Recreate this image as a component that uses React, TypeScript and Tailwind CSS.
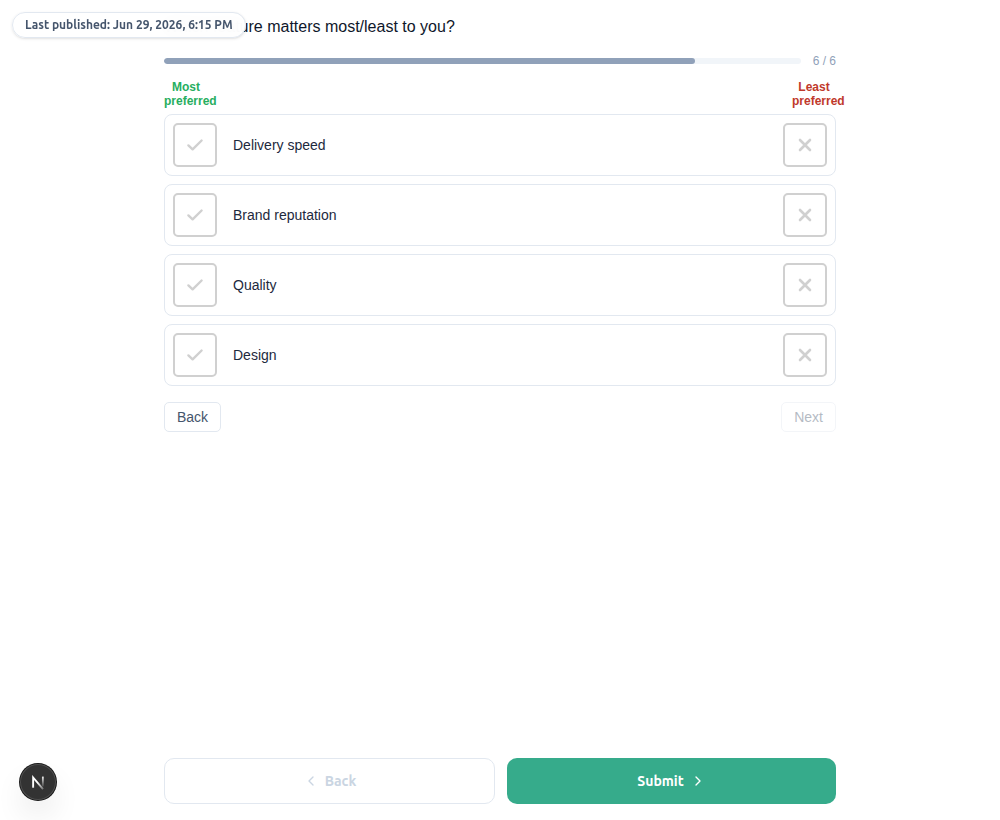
import { useState } from "react";
import { ChevronLeft, ChevronRight } from "lucide-react";

interface OptionRowProps {
  label: string;
  choice?: "most" | "least";
  onChoose: (choice: "most" | "least") => void;
}

const options = ["Delivery speed", "Brand reputation", "Quality", "Design"];

function OptionRow({ label, choice, onChoose }: OptionRowProps) {
  return (
    <li className="flex items-center gap-4 rounded-lg border border-slate-200 bg-white p-2">
      <button
        type="button"
        aria-label={`${label}: most preferred`}
        aria-pressed={choice === "most"}
        onClick={() => onChoose("most")}
        className="flex size-11 shrink-0 cursor-pointer items-center justify-center rounded-[5px] border-2 border-[#d0d0d0] text-[#d0d0d0] aria-pressed:border-[#27ae60] aria-pressed:text-[#27ae60]"
      >
        <svg viewBox="0 0 20 20" className="size-5" fill="none" stroke="currentColor" strokeWidth="2.4" strokeLinecap="round" strokeLinejoin="round">
          <path d="M3.4 10.4 7.6 14.3 16.6 5.5" />
        </svg>
      </button>
      <span className="flex-1 text-sm text-slate-800">{label}</span>
      <button
        type="button"
        aria-label={`${label}: least preferred`}
        aria-pressed={choice === "least"}
        onClick={() => onChoose("least")}
        className="flex size-11 shrink-0 cursor-pointer items-center justify-center rounded-[5px] border-2 border-[#d0d0d0] text-[#d0d0d0] aria-pressed:border-[#c0392b] aria-pressed:text-[#c0392b]"
      >
        <svg viewBox="0 0 20 20" className="size-5" fill="none" stroke="currentColor" strokeWidth="2.6" strokeLinecap="round">
          <path d="M5 5 15 15M15 5 5 15" />
        </svg>
      </button>
    </li>
  );
}

function DevBadge() {
  return (
    <button
      type="button"
      aria-label="Open dev tools"
      className="fixed bottom-5 left-5 flex size-9 items-center justify-center rounded-full bg-[#333333] shadow-[0_0_0_1px_#171717,inset_0_0_0_1px_rgba(255,255,255,0.14),0_16px_32px_-8px_rgba(0,0,0,0.24)]"
    >
      <svg viewBox="0 0 40 40" className="size-9" fill="none">
        <defs>
          <linearGradient id="stem" x1="26" y1="13" x2="26" y2="27" gradientUnits="userSpaceOnUse">
            <stop stopColor="#fff" />
            <stop offset="0.65" stopColor="#fff" stopOpacity="0.3" />
            <stop offset="1" stopColor="#fff" stopOpacity="0" />
          </linearGradient>
          <linearGradient id="slash" x1="20" y1="20" x2="27" y2="29" gradientUnits="userSpaceOnUse">
            <stop stopColor="#fff" />
            <stop offset="1" stopColor="#fff" stopOpacity="0.2" />
          </linearGradient>
        </defs>
        <path d="M14.6 26.5V15L25.6 28" stroke="url(#slash)" strokeWidth="2.1" />
        <path d="M25.4 14V25" stroke="url(#stem)" strokeWidth="2" />
      </svg>
    </button>
  );
}

export default function App() {
  const [most, setMost] = useState("");
  const [least, setLeast] = useState("");
  const step = 5;
  const total = 6;

  const choose = (label: string, choice: "most" | "least") => {
    if (choice === "most") {
      setMost(label);
      if (least === label) setLeast("");
    } else {
      setLeast(label);
      if (most === label) setMost("");
    }
  };

  return (
    <div className="flex min-h-screen flex-col bg-white font-['Liberation_Sans',Arial,sans-serif]">
      <div className="fixed top-3 left-3 z-10 rounded-full border border-slate-200 bg-white/95 px-3 py-1 font-[Ubuntu,'Noto_Sans',sans-serif] text-xs font-semibold text-slate-600 shadow-sm backdrop-blur-sm">
        Last published: Jun 29, 2026, 6:15 PM
      </div>

      <main className="mx-auto w-full max-w-2xl flex-1 pt-[17px]">
        <h1 className="text-base leading-5 text-slate-900">
          Which feature matters most/least to you?
        </h1>

        <div className="mt-4 flex items-center gap-3">
          <div
            role="progressbar"
            aria-label="Progress"
            aria-valuenow={step}
            aria-valuemax={total}
            className="h-1.5 flex-1 overflow-hidden rounded-full bg-slate-100"
          >
            <div
              className="h-full rounded-full bg-slate-400"
              style={{ width: `${(step / total) * 100}%` }}
            />
          </div>
          <span className="text-xs text-slate-400">6 / 6</span>
        </div>

        <div className="mt-[11px] flex justify-between text-center text-xs leading-[14px] font-bold">
          <div className="w-11 text-[#27ae60]">Most preferred</div>
          <div className="w-11 text-[#c0392b]">Least preferred</div>
        </div>

        <ul className="mt-1.5 flex flex-col gap-2">
          {options.map((label) => (
            <OptionRow
              key={label}
              label={label}
              choice={most === label ? "most" : least === label ? "least" : undefined}
              onChoose={(choice) => choose(label, choice)}
            />
          ))}
        </ul>

        <div className="mt-4 flex justify-between text-sm text-slate-600">
          <button type="button" className="cursor-pointer rounded-[5px] border border-slate-200 px-3 py-1">
            Back
          </button>
          <button
            type="button"
            disabled={!most || !least}
            className="rounded-[5px] border border-slate-200 px-3 py-1 disabled:opacity-40"
          >
            Next
          </button>
        </div>
      </main>

      <footer className="mx-auto flex w-full max-w-2xl gap-3 pb-4 font-[Ubuntu,'Noto_Sans',sans-serif] text-sm font-semibold">
        <button
          type="button"
          disabled
          className="flex flex-1 items-center justify-center gap-1.5 rounded-[10px] border border-slate-200 p-3 text-slate-300"
        >
          <ChevronLeft className="size-4" />
          Back
        </button>
        <button
          type="submit"
          className="flex flex-1 cursor-pointer items-center justify-center gap-1.5 rounded-[10px] bg-[#36ab8b] p-3 text-white"
        >
          Submit
          <ChevronRight className="size-4" />
        </button>
      </footer>

      <DevBadge />
    </div>
  );
}
